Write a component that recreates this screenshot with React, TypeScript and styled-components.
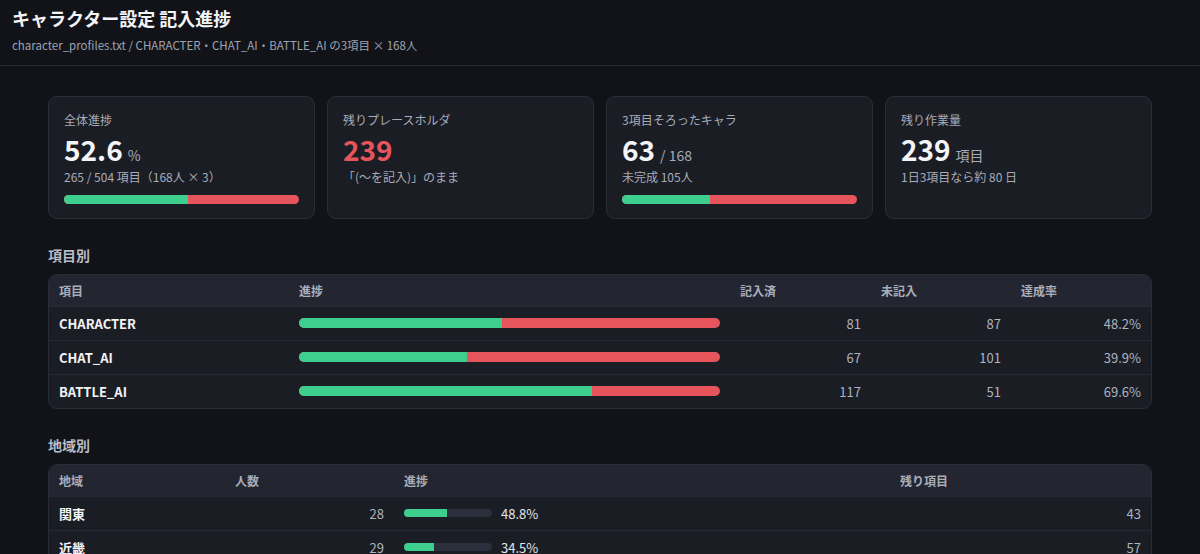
import React from "react";
import styled, { createGlobalStyle } from "styled-components";

const GREEN = "#3ecf8e";
const RED = "#e5555b";

const GlobalStyle = createGlobalStyle`
  html, body {
    margin: 0;
    padding: 0;
    background: #121319;
    color: #e8eaf0;
    font-family: "Noto Sans CJK JP", "Noto Sans", sans-serif;
  }
`;

const Header = styled.header`
  padding: 6px 12px 11px;
  border-bottom: 1px solid #2a2c34;
`;

const Title = styled.h1`
  margin: 0;
  font-size: 18px;
  line-height: 24px;
  font-weight: 700;
  color: #f3f4f7;
`;

const Subtitle = styled.div`
  margin-top: 6px;
  font-size: 11.5px;
  line-height: 18px;
  color: #9ea4b1;
`;

const Main = styled.main`
  max-width: 1104px;
  margin: 0 auto;
  padding: 30px 0 24px;
`;

const CardGrid = styled.div`
  display: grid;
  grid-template-columns: repeat(4, 1fr);
  gap: 12px;
`;

const Card = styled.div`
  background: #1b1d25;
  border: 1px solid #2b2e39;
  border-radius: 9px;
  padding: 14px 15px;
  height: 123px;
  box-sizing: border-box;
`;

const CardLabel = styled.div`
  font-size: 12px;
  line-height: 18px;
  color: #a7acb8;
`;

const BigValue = styled.div<{ $accent?: boolean }>`
  margin-top: 4px;
  font-size: 28px;
  line-height: 32px;
  font-weight: 700;
  color: ${({ $accent }) => ($accent ? RED : "#f4f5f8")};
`;

const Unit = styled.span`
  margin-left: 5px;
  font-size: 14px;
  line-height: 1;
  font-weight: 400;
  color: #a7acb8;
`;

const CardNote = styled.div`
  margin-top: 3px;
  font-size: 12px;
  line-height: 18px;
  color: #a7acb8;
`;

const SplitBar = styled.div<{ $height: number }>`
  display: flex;
  height: ${({ $height }) => $height}px;
  border-radius: ${({ $height }) => $height / 2}px;
  overflow: hidden;
  background: ${RED};
`;

const CardBar = styled(SplitBar)`
  margin-top: 9px;
`;

const Fill = styled.div`
  height: 100%;
  background: ${GREEN};
`;

const SectionTitle = styled.h2`
  margin: 26px 0 9px;
  font-size: 14px;
  line-height: 20px;
  font-weight: 700;
  color: #b8bcc8;
`;

const TableWrap = styled.div`
  border: 1px solid #2a2d38;
  border-radius: 9px;
  overflow: hidden;
  background: #1b1d25;
`;

const Table = styled.table`
  width: 100%;
  border-collapse: collapse;
  table-layout: fixed;
`;

const Th = styled.th<{ $w: number }>`
  box-sizing: border-box;
  width: ${({ $w }) => $w}px;
  height: 31px;
  padding: 0 10px;
  background: #232631;
  text-align: left;
  font-size: 12px;
  font-weight: 600;
  color: #a9aebb;
`;

const Td = styled.td<{ $num?: boolean; $strong?: boolean }>`
  box-sizing: border-box;
  height: 34px;
  padding: 0 10px;
  border-top: 1px solid #262933;
  font-size: 13px;
  text-align: ${({ $num }) => ($num ? "right" : "left")};
  font-weight: ${({ $strong }) => ($strong ? 700 : 400)};
  color: ${({ $num, $strong }) => ($strong ? "#f1f3f6" : $num ? "#aeb3bf" : "#e0e3ea")};
`;

const MiniProgress = styled.div`
  display: flex;
  align-items: center;
  gap: 9px;
  font-size: 13px;
  color: #e3e6ec;
`;

const Track = styled.div`
  width: 88px;
  height: 8px;
  border-radius: 4px;
  background: #2b2f3b;
  overflow: hidden;
`;

const summary = { done: 265, total: 504 };

const fields = [
  { name: "CHARACTER", done: 81, left: 87 },
  { name: "CHAT_AI", done: 67, left: 101 },
  { name: "BATTLE_AI", done: 117, left: 51 },
];

const regions = [
  { name: "関東", people: 28, rate: 48.8, left: 43 },
  { name: "近畿", people: 29, rate: 34.5, left: 57 },
  { name: "中部", people: 24, rate: 55.6, left: 32 },
];

const pct = (a: number, b: number) => (a / b) * 100;

export default function App() {
  return (
    <>
      <GlobalStyle />
      <Header>
        <Title>キャラクター設定 記入進捗</Title>
        <Subtitle>
          character_profiles.txt / CHARACTER・CHAT_AI・BATTLE_AI の3項目 × 168人
        </Subtitle>
      </Header>

      <Main>
        <CardGrid>
          <Card>
            <CardLabel>全体進捗</CardLabel>
            <BigValue>
              52.6<Unit>%</Unit>
            </BigValue>
            <CardNote>265 / 504 項目（168人 × 3）</CardNote>
            <CardBar $height={9}>
              <Fill style={{ width: `${pct(summary.done, summary.total)}%` }} />
            </CardBar>
          </Card>
          <Card>
            <CardLabel>残りプレースホルダ</CardLabel>
            <BigValue $accent>239</BigValue>
            <CardNote>「(〜を記入)」のまま</CardNote>
          </Card>
          <Card>
            <CardLabel>3項目そろったキャラ</CardLabel>
            <BigValue>
              63<Unit>/ 168</Unit>
            </BigValue>
            <CardNote>未完成 105人</CardNote>
            <CardBar $height={9}>
              <Fill style={{ width: `${pct(63, 168)}%` }} />
            </CardBar>
          </Card>
          <Card>
            <CardLabel>残り作業量</CardLabel>
            <BigValue>
              239<Unit>項目</Unit>
            </BigValue>
            <CardNote>1日3項目なら約 80 日</CardNote>
          </Card>
        </CardGrid>

        <SectionTitle>項目別</SectionTitle>
        <TableWrap>
          <Table>
            <thead>
              <tr>
                <Th $w={240}>項目</Th>
                <Th $w={441}>進捗</Th>
                <Th $w={141}>記入済</Th>
                <Th $w={140}>未記入</Th>
                <Th $w={140}>達成率</Th>
              </tr>
            </thead>
            <tbody>
              {fields.map((f) => {
                const rate = pct(f.done, f.done + f.left);
                return (
                  <tr key={f.name}>
                    <Td $strong>{f.name}</Td>
                    <Td>
                      <SplitBar $height={10}>
                        <Fill style={{ width: `${rate}%` }} />
                      </SplitBar>
                    </Td>
                    <Td $num>{f.done}</Td>
                    <Td $num>{f.left}</Td>
                    <Td $num>{rate.toFixed(1)}%</Td>
                  </tr>
                );
              })}
            </tbody>
          </Table>
        </TableWrap>

        <SectionTitle>地域別</SectionTitle>
        <TableWrap>
          <Table>
            <thead>
              <tr>
                <Th $w={176}>地域</Th>
                <Th $w={169}>人数</Th>
                <Th $w={496}>進捗</Th>
                <Th $w={261}>残り項目</Th>
              </tr>
            </thead>
            <tbody>
              {regions.map((r) => (
                <tr key={r.name}>
                  <Td $strong>{r.name}</Td>
                  <Td $num>{r.people}</Td>
                  <Td>
                    <MiniProgress>
                      <Track>
                        <Fill style={{ width: `${r.rate}%` }} />
                      </Track>
                      {r.rate.toFixed(1)}%
                    </MiniProgress>
                  </Td>
                  <Td $num>{r.left}</Td>
                </tr>
              ))}
            </tbody>
          </Table>
        </TableWrap>
      </Main>
    </>
  );
}
